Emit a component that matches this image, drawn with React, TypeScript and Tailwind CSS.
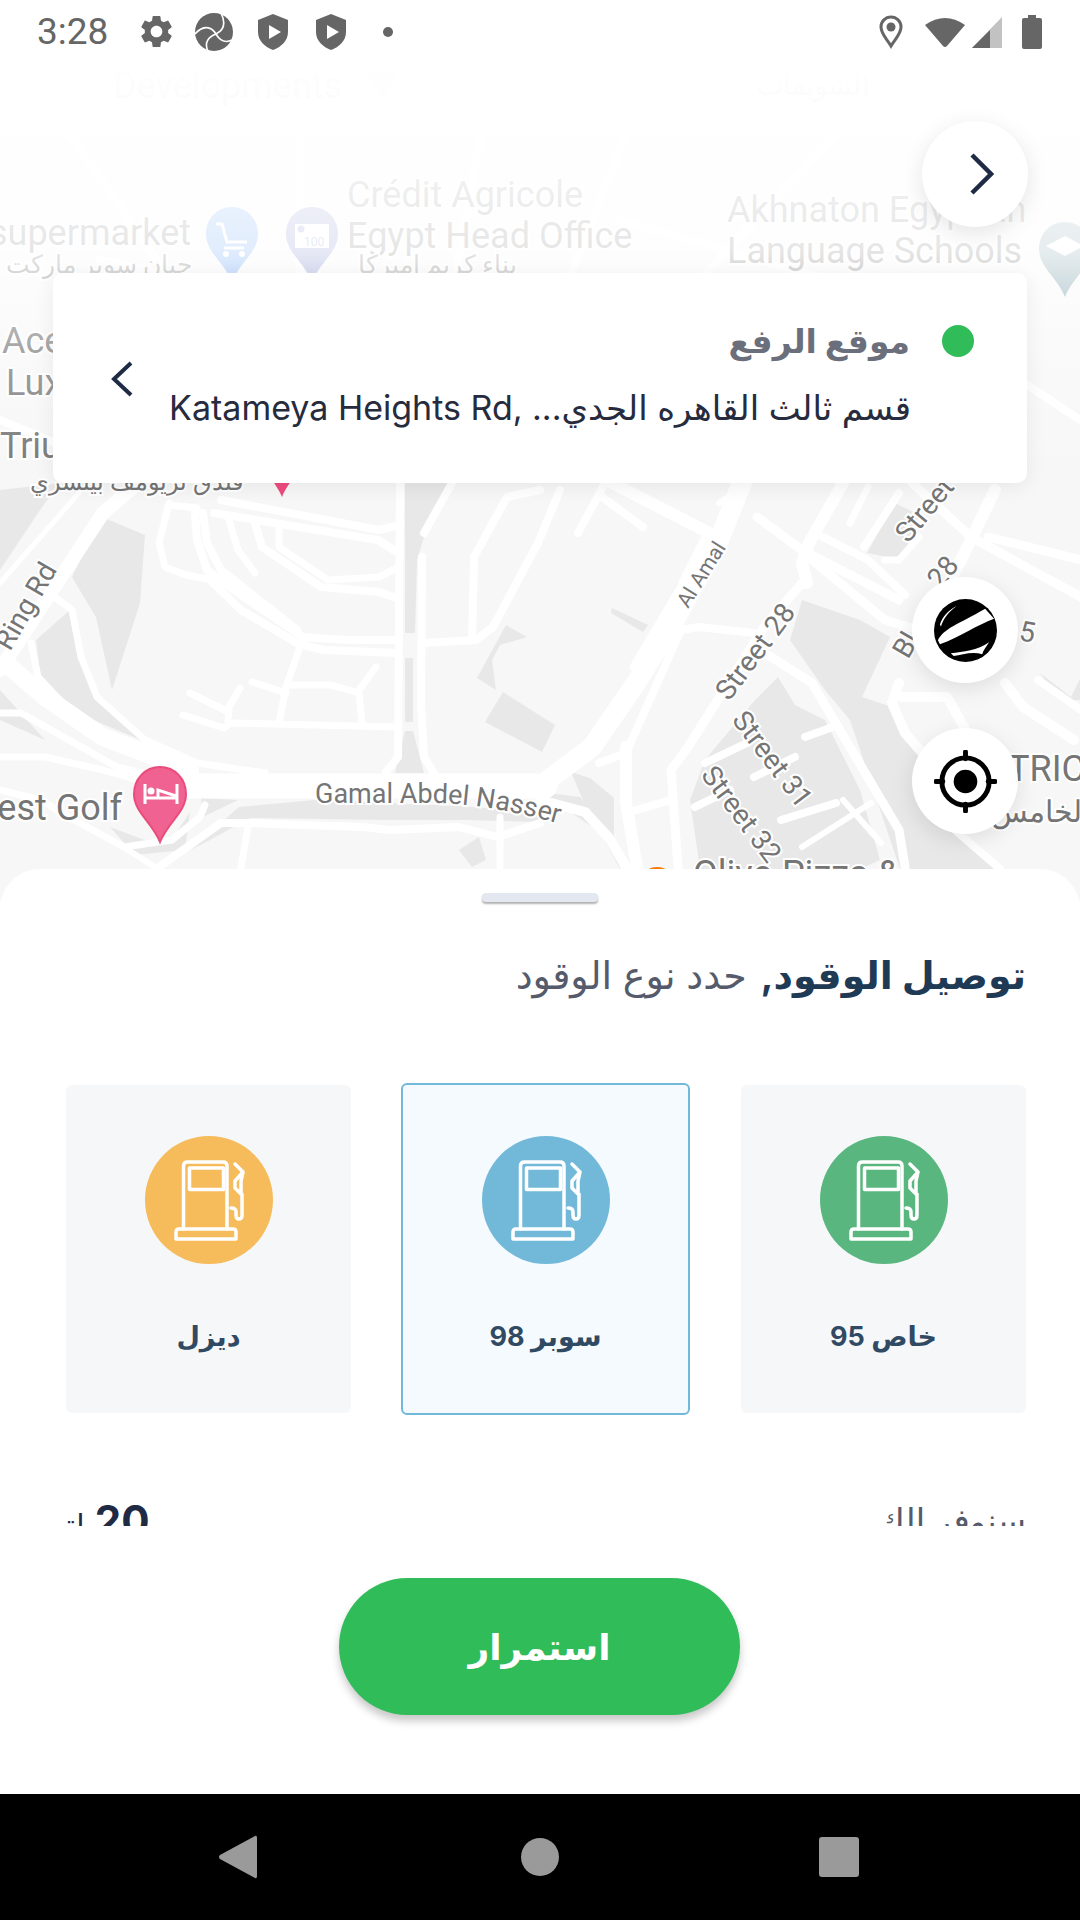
import React from "react";
import { MdSettings } from "react-icons/md";

// [stroke width, path] traced off the map tiles
const roads: [number, string][] = [
  // ring road and left side
  [14, "M0,670 L59,580 L103,513 L138,483"],
  [5, "M0,583 L79,493"],
  [7, "M55,597 L72,610 L81,657 L97,697 L145,740 L197,763 L265,773"],
  [18, "M10,667 L45,697 L103,737 L190,770"],
  [7, "M31,643 L38,677 L69,710"],
  [7, "M0,713 L21,713 L69,740 L117,767 L150,775"],
  [7, "M0,757 L45,757 L103,770 L138,780"],
  [7, "M0,790 L40,800 L69,817 L124,847 L172,840 L200,817 L205,805"],
  [8, "M159,867 L221,823 L248,823 L362,827 L390,830 L459,827 L497,837 L540,823"],
  [7, "M248,827 L241,867"],
  [7, "M500,817 L500,867"],
  [6, "M128,850 L155,867"],
  // estate roads
  [7, "M169,503 L159,543 L165,567 L186,575 L214,580"],
  [7, "M169,505 L197,508"],
  [8, "M221,500 L379,530 L400,525"],
  [8, "M214,513 L378,540 L397,552"],
  [8, "M195,513 L197,540 L207,570 L238,593 L303,637"],
  [8, "M203,513 L207,543 L221,570 L297,630"],
  [8, "M210,580 L241,610 L297,643"],
  [8, "M303,637 L345,640 L397,640"],
  [8, "M303,645 L324,650 L397,653"],
  [8, "M424,643 L476,640 L493,627 L538,543 L560,490"],
  [8, "M400,483 L398,757 L386,772"],
  [8, "M422,557 L421,703 L424,757 L434,773"],
  [8, "M424,533 L452,483"],
  [8, "M474,563 L472,637"],
  [8, "M474,557 L507,497 L540,490"],
  [7, "M228,517 L238,550 L255,573"],
  [8, "M255,523 L262,547 L321,587 L379,592 L397,598"],
  [7, "M279,530 L279,547 L328,580 L379,577 L397,568"],
  [7, "M300,647 L286,687 L279,723"],
  [7, "M252,682 L286,693"],
  [7, "M290,685 L331,685 L359,693 L362,723"],
  [7, "M359,690 L376,667"],
  [7, "M190,693 L229,712"],
  [7, "M183,715 L224,728 L231,723 L397,727"],
  [7, "M228,720 L229,707 L240,688"],
  // main road, runs into Al Amal
  [25, "M190,786 L545,786"],
  [20, "M747,470 L719,540 L671,627 L636,683 L592,747 L540,786"],
  [8, "M602,497 L643,527"],
  [8, "M605,483 L578,533"],
  [12, "M612,483 L723,540"],
  [6, "M719,503 L743,487"],
  [7, "M633,667 L678,590 L705,537"],
  [8, "M599,763 L626,753 L681,630 L699,627 L754,633"],
  [12, "M626,747 L626,803 L637,867"],
  [10, "M540,800 L585,812 L609,838 L626,867"],
  [8, "M626,813 L671,800"],
  // streets by the buildings
  [9, "M802,583 L764,627 L688,747 L671,770 L678,867"],
  [9, "M768,655 L812,683 L899,830 L905,867"],
  [9, "M757,517 L802,550 L899,600"],
  [9, "M812,560 L885,620 L919,630"],
  [12, "M843,483 L809,543 L802,563 L807,583"],
  [7, "M868,487 L850,523"],
  [8, "M899,493 L864,547"],
  [8, "M823,537 L868,560 L905,595"],
  [7, "M885,560 L899,560 L919,537"],
  [12, "M995,490 L961,560 L945,590"],
  [9, "M912,483 L971,537 L1081,597"],
  [9, "M988,537 L1081,560"],
  [10, "M899,683 L892,703 L905,733 L926,757"],
  [10, "M902,697 L947,697 L964,727"],
  [10, "M1005,683 L1023,707 L1074,740"],
  [8, "M1038,680 L1081,710"],
  [8, "M705,763 L747,743"],
  [8, "M695,807 L730,790"],
  [8, "M805,737 L833,727"],
  [8, "M754,777 L795,757"],
  [8, "M781,820 L836,803"],
  [6, "M802,847 L871,803"],
  [6, "M843,800 L881,843"],
  [8, "M955,830 L1000,869"],
  // the part under the white fade
  [8, "M60,120 L240,380"],
  [8, "M300,100 L300,300"],
  [8, "M480,140 L420,470"],
  [8, "M640,100 L560,300 L490,470"],
  [8, "M840,130 L690,290 L640,470"],
  [8, "M620,220 L900,300 L1080,420"],
  [8, "M100,260 L480,340"],
  [8, "M760,280 L840,470"],
  [8, "M0,420 L120,470"],
];

const mapBlocks = [
  "102,517 145,535 140,603 112,690 96,617 72,577",
  "36,640 70,610 77,653 100,703 141,740 86,717 41,680",
  "405,483 451,483 427,527 417,560 415,633 405,633",
  "405,658 413,658 413,722 405,722",
  "405,731 413,731 424,773 395,773",
  "201,798 238,800 203,817",
  "239,807 315,800 460,806 540,812 540,822 465,820 385,820 250,818 210,840 190,850",
  "110,827 150,842 175,835 190,812 185,850 135,855",
  "506,625 527,637 500,645 492,660 496,690 477,678",
  "503,692 555,725 542,752 485,722",
  "790,640 802,600 860,620 890,637 862,697 895,708 960,830 1000,869 900,869 850,720 825,690",
  "755,700 778,677 795,705 825,720 860,790 880,860 860,869 700,869 690,800 705,760",
  "895,503 919,515 902,560 867,553",
  "612,608 648,625 643,632 611,613",
  "702,540 714,542 685,580 670,610 658,640 648,635",
  "0,490 60,483 40,510 0,570",
  "0,690 45,740 0,720",
  "1040,673 1071,697 1081,677 1081,700 1060,700",
  "459,850 479,837 486,860 472,867",
  "571,772 590,778 614,798 614,840 585,805",
  "540,792 580,797 614,840 620,869 600,832 570,812 540,806",
];

const labelClass = "fill-[#757575] font-['Roboto',sans-serif]";

// map labels keep the white halo google draws round them
const MapLabel = ({ x, y, size = 36, rotate, anchor, children }: { x: number; y: number; size?: number; rotate?: number; anchor?: "start" | "middle" | "end"; children: React.ReactNode }) => (
  <text
    x={x}
    y={y}
    fontSize={size}
    textAnchor={anchor}
    transform={rotate ? `rotate(${rotate} ${x} ${y})` : undefined}
    stroke="#fff"
    strokeWidth={4}
    paintOrder="stroke"
    className={labelClass}
  >
    {children}
  </text>
);

const Pin = ({ x, top, color }: { x: number; top: number; color: string }) => (
  <path d={`M${x},${top} c15,0 26,12 26,27 c0,18 -18,28 -26,48 c-8,-20 -26,-30 -26,-48 c0,-15 11,-27 26,-27z`} fill={color} />
);

const MapBackdrop = () => (
  <svg width={1080} height={900} viewBox="0 0 1080 900" className="absolute left-0 top-0">
    <rect width={1080} height={900} fill="#f7f7f7" />
    {mapBlocks.map((points, i) => (
      <polygon key={i} points={points} fill="#e8e8e8" />
    ))}
    {roads.map(([width, d], i) => (
      <path key={i} d={d} fill="none" stroke="#fff" strokeWidth={width} strokeLinecap="round" strokeLinejoin="round" />
    ))}

    <MapLabel x={113} y={98}>Developments</MapLabel>
    <path d="M365,70 h33 l-16,30z" fill="#a8c0b8" />
    <MapLabel x={870} y={95} anchor="end" size={28}>الشويفات</MapLabel>
    <MapLabel x={191} y={245} anchor="end">supermarket</MapLabel>
    <MapLabel x={192} y={273} anchor="end" size={25}>جيان سوبر ماركت</MapLabel>
    <Pin x={232} top={207} color="#5b9cf5" />
    <path d="M216,224 h6 l5,18 h20 M224,248 h20" fill="none" stroke="#fff" strokeWidth={3} />
    <circle cx={226} cy={254} r={3} fill="#fff" />
    <circle cx={242} cy={254} r={3} fill="#fff" />
    <Pin x={312} top={207} color="#7986cb" />
    <rect x={295} y={224} width={34} height={24} fill="#fff" />
    <circle cx={301} cy={229} r={3.5} fill="#7986cb" />
    <text x={304} y={246} fontSize={12} fill="#7986cb" className="font-['Roboto',sans-serif]">100</text>
    <MapLabel x={347} y={207}>Crédit Agricole</MapLabel>
    <MapLabel x={347} y={248}>Egypt Head Office</MapLabel>
    <MapLabel x={358} y={273} size={25}>بناء كريم اميركا</MapLabel>
    <MapLabel x={727} y={222}>Akhnaton Egyptian</MapLabel>
    <MapLabel x={727} y={263}>Language Schools</MapLabel>
    <Pin x={1065} top={222} color="#7b9eaa" />
    <path d="M1046,246 l19,-10 l19,10 l-19,10z" fill="#fff" />
    <MapLabel x={2} y={353}>Ace</MapLabel>
    <MapLabel x={6} y={395}>Lux</MapLabel>
    <MapLabel x={0} y={458}>Triu</MapLabel>
    <MapLabel x={243} y={490} anchor="end" size={24}>فندق تريومف بيتسري</MapLabel>
    <Pin x={282} top={422} color="#ee4b7f" />

    <MapLabel x={10} y={652} size={28} rotate={-60}>Ring Rd</MapLabel>
    <path id="nasser" d="M315,803 L440,803 Q500,805 580,830" fill="none" />
    <text fontSize={27} stroke="#fff" strokeWidth={4} paintOrder="stroke" className={labelClass}>
      <textPath href="#nasser">Gamal Abdel Nasser</textPath>
    </text>
    <MapLabel x={122} y={820} anchor="end">est Golf</MapLabel>
    <path d="M160,767 c15,0 26,12 26,27 c0,18 -18,28 -26,48 c-8,-20 -26,-30 -26,-48 c0,-15 11,-27 26,-27z" fill="#f06292" stroke="#ea4c7c" strokeWidth={2} />
    <path d="M145,784 v20 M177,784 v20 M145,798 h32 M158,798 v-8 l18,6" fill="none" stroke="#fff" strokeWidth={3} />
    <circle cx={151} cy={791} r={3.5} fill="#fff" />
    <MapLabel x={688} y={609} size={21} rotate={-58}>Al Amal</MapLabel>
    <MapLabel x={729} y={702} size={28} rotate={-53}>Street 28</MapLabel>
    <MapLabel x={731} y={720} size={28} rotate={53}>Street 31</MapLabel>
    <MapLabel x={700} y={775} size={28} rotate={53}>Street 32</MapLabel>
    <MapLabel x={908} y={544} size={28} rotate={-50}>Street</MapLabel>
    <MapLabel x={908} y={660} size={28} rotate={-60}>Bl</MapLabel>
    <MapLabel x={940} y={590} size={28} rotate={-50}>28</MapLabel>
    <MapLabel x={1018} y={640} size={28} rotate={10}>5</MapLabel>
    <MapLabel x={1008} y={781}>TRIC</MapLabel>
    <MapLabel x={1090} y={822} anchor="end" size={30}>الخامس</MapLabel>
    <MapLabel x={693} y={886}>Olivo Pizza &amp;</MapLabel>
    <circle cx={657} cy={885} r={18} fill="#f57c00" />
  </svg>
);

const StatusBar = () => (
  <div className="relative flex h-[63px] items-center pl-[37px] pr-[38px] text-[#666]">
    <span className="w-[72px] font-['Roboto',sans-serif] text-[37px] leading-none">3:28</span>
    <MdSettings size={39} className="ml-[28px]" />
    <svg viewBox="0 0 38 38" className="ml-[19px] h-[38px] w-[38px]">
      <circle cx={19} cy={19} r={19} fill="#666" />
      <path d="M26,0 C31,10 29,17 21,21 M0,21 C8,12 16,13 21,21 M13,38 C9,30 13,24 21,21 M37,27 C31,30 25,28 21,21" fill="none" stroke="#fff" strokeWidth={1.6} />
    </svg>
    <Shield className="ml-[25px]" />
    <Shield className="ml-[28px]" />
    <span className="ml-[37px] h-[10px] w-[10px] rounded-full bg-[#666]" />
    <div className="ml-auto flex items-center">
      <svg viewBox="0 0 24 34" className="h-[34px] w-[24px]">
        <path d="M12,2 a10,10 0 0 1 10,10 c0,7 -6,12 -10,19 c-4,-7 -10,-12 -10,-19 a10,10 0 0 1 10,-10z" fill="none" stroke="#666" strokeWidth={3} />
        <circle cx={12} cy={12} r={4.5} fill="#666" />
      </svg>
      <svg viewBox="0 0 42 32" className="ml-[21px] h-[32px] w-[42px]">
        <path d="M1,9 Q21,-5 41,9 L23,30 Q21,32 19,30z" fill="#666" />
      </svg>
      <svg viewBox="0 0 32 32" className="ml-[5px] h-[32px] w-[32px]">
        <path d="M31,1 V32 H1z" fill="#c2c2c2" />
        <path d="M19,14 V32 H1z" fill="#666" />
      </svg>
      <svg viewBox="0 0 20 34" className="ml-[19px] h-[34px] w-[20px]">
        <path d="M6,0 h8 v3 h4 q2,0 2,2 v27 q0,2 -2,2 h-16 q-2,0 -2,-2 v-27 q0,-2 2,-2 h4z" fill="#666" />
      </svg>
    </div>
  </div>
);

const Shield = ({ className }: { className: string }) => (
  <svg viewBox="0 0 30 36" className={`${className} h-[36px] w-[30px]`}>
    <path d="M15,0 L30,6 V18 C30,27 23,33 15,36 C7,33 0,27 0,18 V6z" fill="#666" />
    <path d="M11,11 L23,18 L11,25z" fill="#fff" />
  </svg>
);

const RoundButton = ({ className, children }: { className: string; children: React.ReactNode }) => (
  <button className={`${className} absolute flex h-[106px] w-[106px] items-center justify-center rounded-full bg-white shadow-[0_6px_22px_rgba(0,0,0,0.1)]`}>
    {children}
  </button>
);

const PumpIcon = () => (
  <svg viewBox="0 0 128 128" className="h-[128px] w-[128px]" fill="none" stroke="#fff" strokeWidth={3.5} strokeLinejoin="round" strokeLinecap="round">
    <path d="M38.5,93 V30 q0,-4 4,-4 H78 q4,0 4,4 V93" />
    <rect x={44.5} y={32} width={34} height={21.5} />
    <path d="M34,93 H88 q3,0 3,3 V103 H31 V96 q0,-3 3,-3z" />
    <path d="M90,28 L98,36 L90,45 V52 L96,58 V45 L98,36 M97,58 V79 q0,4 -3,4 q-3,0 -3,-4 v-3 q0,-4 -5,-4" />
  </svg>
);

const fuels = [
  { label: "ديزل", color: "bg-[#f6bb5b]", selected: false },
  { label: "سوبر 98", color: "bg-[#72b9d9]", selected: true },
  { label: "خاص 95", color: "bg-[#5ab67f]", selected: false },
];

export default function App() {
  return (
    <div className="relative flex h-[1920px] w-[1080px] flex-col overflow-hidden bg-white font-['Inter','Noto_Sans','DejaVu_Sans',sans-serif]">
      <div className="relative h-[869px]">
        <MapBackdrop />
        <div className="absolute left-0 top-0 h-[490px] w-full bg-[linear-gradient(180deg,#fff_60px,rgba(255,255,255,0.97)_110px,rgba(255,255,255,0.82)_250px,rgba(255,255,255,0.35)_350px,rgba(255,255,255,0)_480px)]" />
        <StatusBar />

        <RoundButton className="left-[922px] top-[121px]">
          <svg viewBox="0 0 24 42" className="ml-[13px] h-[42px] w-[24px]" fill="none" stroke="#1f2a44" strokeWidth={4.5}>
            <path d="M2,2 L21,21 L2,40" />
          </svg>
        </RoundButton>

        <div className="absolute left-[53px] top-[273px] h-[210px] w-[974px] rounded-[10px] bg-white shadow-[0_4px_20px_rgba(0,0,0,0.07)]">
          <div dir="rtl" className="absolute right-[117px] top-[38px] text-[33px] font-bold leading-[60px] text-[#6b6f7b]">موقع الرفع</div>
          <span className="absolute left-[889px] top-[52px] h-[32px] w-[32px] rounded-full bg-[#2fbc59]" />
          <div dir="rtl" className="absolute left-[117px] top-[105px] w-[741px] overflow-hidden whitespace-nowrap text-[34px] leading-[60px] text-[#262b3d]">
            قسم ثالث القاهره الجدي... ,Katameya Heights Rd
          </div>
          <svg viewBox="0 0 22 36" className="absolute left-[58px] top-[88px] h-[36px] w-[22px]" fill="none" stroke="#1f2a44" strokeWidth={4}>
            <path d="M20,2 L3,18 L20,34" />
          </svg>
        </div>

        <RoundButton className="left-[912px] top-[577px]">
          <svg viewBox="0 0 64 64" className="h-[63px] w-[63px]">
            <circle cx={32} cy={32} r={32} fill="#000" />
            <path d="M4,42 C10,30 24,26 52,10 L61,20 C44,26 28,38 6,46z" fill="#fff" />
            <path d="M17,55 C30,54 44,52 56,44 C53,49 50,52 49,56 C38,53 28,57 20,58z" fill="#fff" />
            <path d="M6,26 C9,17 14,12 23,7 C15,13 10,19 7,28z" fill="#fff" />
          </svg>
        </RoundButton>
        <RoundButton className="left-[912px] top-[728px]">
          <svg viewBox="0 0 64 64" className="h-[63px] w-[63px]">
            <circle cx={32} cy={32} r={24} fill="none" stroke="#000" strokeWidth={5} />
            <circle cx={32} cy={32} r={12} fill="#000" />
            <path d="M32,2 V9 M32,55 V62 M2,32 H9 M55,32 H62" stroke="#000" strokeWidth={5} strokeLinecap="round" />
          </svg>
        </RoundButton>
      </div>

      <div className="relative flex h-[925px] flex-col rounded-t-[40px] bg-white pt-[24px]">
        <div className="mx-auto h-[9px] w-[116px] rounded-[4px] bg-[#e3e7ef] shadow-[0_2px_2px_rgba(0,0,0,0.3)]" />

        <div dir="rtl" className="mt-[48px] flex gap-[14px] pr-[54px] text-[38px] leading-[50px] text-[#555b6b]">
          <span className="font-bold text-[#1f3a54]">توصيل الوقود,</span>
          <span>حدد نوع الوقود</span>
        </div>

        <div className="mt-[83px] flex items-center pl-[66px]">
          {fuels.map((fuel) => (
            <div
              key={fuel.label}
              className={
                fuel.selected
                  ? "mx-[50px] flex h-[332px] w-[289px] flex-col items-center rounded-[6px] border-2 border-[#72b9d9] bg-[#f5fafe] pt-[51px]"
                  : "flex h-[328px] w-[285px] flex-col items-center rounded-[6px] bg-[#f6f7f9] pt-[51px] last:ml-[1px]"
              }
            >
              <div className={`${fuel.color} h-[128px] w-[128px] rounded-full`}>
                <PumpIcon />
              </div>
              <div dir="rtl" className="mt-[53px] text-[27px] font-bold leading-[40px] text-[#2f4a62]">{fuel.label}</div>
            </div>
          ))}
        </div>

        <div className="flex h-[111px] items-start justify-between overflow-hidden pl-[50px] pr-[54px] pt-[84px]">
          <div dir="rtl" className="flex items-start gap-[10px] text-[#1f2a44]">
            <span className="mt-[-2px] text-[42px] font-bold leading-[48px]">20</span>
            <span className="mt-[6px] text-[30px] leading-[40px]">لتر</span>
          </div>
          <div dir="rtl" className="text-[34px] leading-[44px] text-[#555b6b]">سنوفر الك</div>
        </div>

        <button className="ml-[339px] mt-[52px] flex h-[137px] w-[401px] items-center justify-center rounded-full bg-[#2fbc59] text-[36px] font-bold text-white shadow-[0_6px_8px_rgba(0,0,0,0.22)]">
          استمرار
        </button>
      </div>

      <div className="relative flex h-[126px] shrink-0 items-center bg-black">
        <svg viewBox="0 0 38 44" className="ml-[219px] h-[44px] w-[38px]">
          <path d="M36,1 Q38,0 38,3 V41 Q38,44 36,43 L1,24 Q-1,22 1,20z" fill="#9a9a9a" />
        </svg>
        <span className="ml-[264px] h-[38px] w-[38px] rounded-full bg-[#9a9a9a]" />
        <span className="ml-[260px] h-[40px] w-[40px] rounded-[3px] bg-[#9a9a9a]" />
      </div>
    </div>
  );
}
